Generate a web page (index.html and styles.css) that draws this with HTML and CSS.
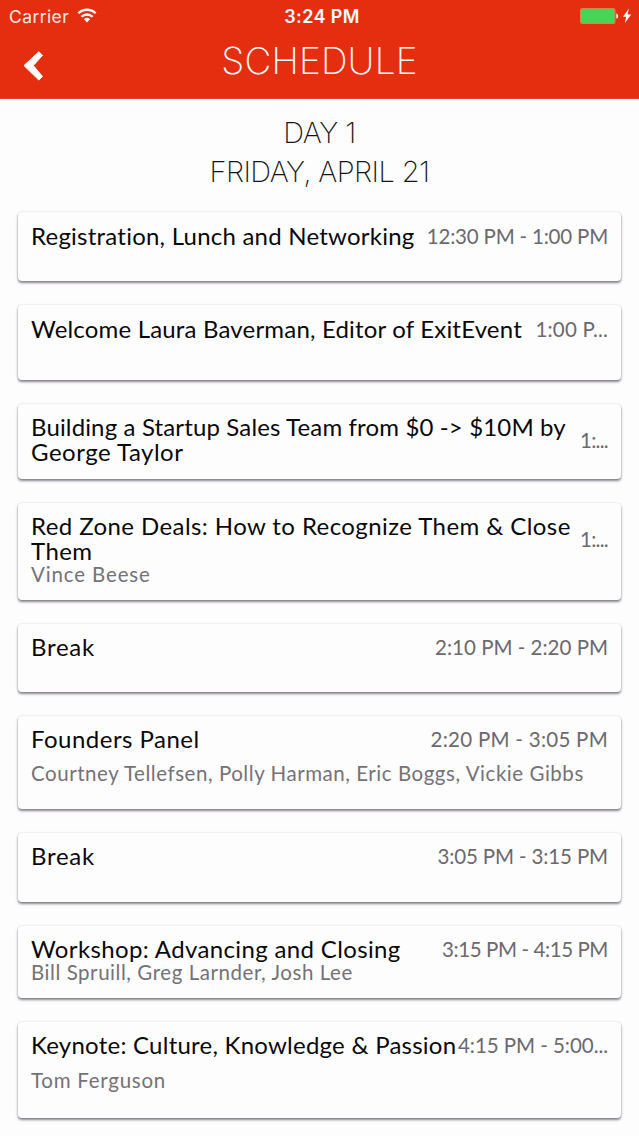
FILE: index.html
```html
<!DOCTYPE html>
<html lang="en">
<head>
<meta charset="utf-8">
<title>Schedule</title>
<link rel="stylesheet" href="styles.css">
</head>
<body>
<header class="header">
  <div class="status">
    <div class="status-left">
      <span class="carrier">Carrier</span>
      <svg class="wifi" viewBox="0 0 20 15" width="20" height="15"><g fill="none" stroke="#fff" stroke-width="2.3"><path d="M1.3 5.3a12.4 12.4 0 0 1 17.4 0"/><path d="M4.4 8.8a8 8 0 0 1 11.2 0"/></g><path d="M6.9 11.2a4.5 4.5 0 0 1 6.2 0L10 14.4z" fill="#fff"/></svg>
    </div>
    <span class="clock">3:24 PM</span>
    <div class="status-right">
      <svg viewBox="0 0 52 17" width="52" height="17"><rect x=".6" y=".6" width="34.3" height="14.8" rx="2" fill="#47d557" stroke="#d08a48" stroke-width="1.2"/><path d="M36.3 5.4c2.4.3 2.4 4.9 0 5.2z" fill="#fff"/><path d="M48.9.4L43 8.8h3.2l-1.4 6.2 6.4-8.6h-3.6z" fill="#fff"/></svg>
    </div>
  </div>
  <div class="nav">
    <svg class="back" viewBox="0 0 22 32" width="22" height="32"><path d="M2 15.6L16.8 1.8l3.7 3.5L11.3 15.6l9.2 10.9-3.7 3.5z" fill="#fff" stroke="#fff" stroke-linejoin="round"/></svg>
    <h1 class="page-title">SCHEDULE</h1>
    <span></span>
  </div>
</header>
<main>
  <div class="day"><div class="day-number">DAY 1</div><div class="day-date">FRIDAY, APRIL 21</div></div>
  <section class="sessions">
    <article class="card registration"><div class="row"><h2>Registration, Lunch and Networking</h2><time>12:30 PM - 1:00 PM</time></div></article>
    <article class="card welcome"><div class="row"><h2>Welcome Laura Baverman, Editor of ExitEvent</h2><time>1:00 P...</time></div></article>
    <article class="card building"><div class="row"><h2>Building a Startup Sales Team from $0 -&gt; $10M by<br><span class="wide">George Taylor</span></h2><time>1:...</time></div></article>
    <article class="card red-zone"><div class="row"><h2>Red Zone Deals: How to Recognize Them &amp; Close<br>Them</h2><time>1:...</time></div><p>Vince Beese</p></article>
    <article class="card break-one"><div class="row"><h2>Break</h2><time>2:10 PM - 2:20 PM</time></div></article>
    <article class="card founders"><div class="row"><h2>Founders Panel</h2><time>2:20 PM - 3:05 PM</time></div><p>Courtney Tellefsen, Polly Harman, Eric Boggs, Vickie Gibbs</p></article>
    <article class="card break-two"><div class="row"><h2>Break</h2><time>3:05 PM - 3:15 PM</time></div></article>
    <article class="card workshop"><div class="row"><h2>Workshop: Advancing and Closing</h2><time>3:15 PM - 4:15 PM</time></div><p>Bill Spruill, Greg Larnder, Josh Lee</p></article>
    <article class="card keynote"><div class="row"><h2>Keynote: Culture, Knowledge &amp; Passion</h2><time>4:15 PM - 5:00...</time></div><p>Tom Ferguson</p></article>
  </section>
</main>
</body>
</html>
```
FILE: styles.css
```css
* { box-sizing: border-box; }
body { margin: 0; height: 1136px; overflow: hidden; background: #fefdfe; font-family: Lato, sans-serif; color: #09090b; font-variant-ligatures: none; }
h1, h2, p { margin: 0; font-weight: 400; }

.header { height: 99px; background: #e52e10; border-bottom: 1px solid #d9442c; color: #fff; font-family: Inter, sans-serif; }
.status { display: grid; grid-template-columns: 1fr auto 1fr; height: 32px; padding: 0 7px 0 9px; line-height: 33px; }
.status-left { display: flex; align-items: center; gap: 8px; }
.carrier { font-size: 17.5px; letter-spacing: .4px; color: #ffe9e2; }
.clock { font-size: 18px; font-weight: 600; letter-spacing: .4px; padding-left: 3px; }
.status-right { display: flex; justify-content: flex-end; align-items: center; }
.wifi { margin-top: -2px; }
.nav { display: grid; grid-template-columns: 60px 1fr 60px; }
.back { margin: 18px 0 0 22px; }
.page-title { text-align: center; font-size: 37px; font-weight: 150; line-height: 58px; letter-spacing: .2px; }

.day { padding: 15px 0 21px; text-align: center; font: 200 29px/38.5px Inter, sans-serif; color: #161417; }
.day-number { letter-spacing: -.5px; }
.day-date { letter-spacing: -.6px; }

.sessions { display: flex; flex-direction: column; gap: 24px; padding: 0 18px; }
.card { flex: none; height: 69px; padding: 10px 13px 0 13px; border-radius: 4px; background: #fefdfe; box-shadow: 0 2px 2.5px rgba(20, 15, 25, .5), 0 0 2px rgba(20, 15, 25, .16); }
.row { display: flex; justify-content: space-between; align-items: center; white-space: nowrap; }
h2 { font-size: 24px; line-height: 25px; }
time { padding-top: 1px; margin-bottom: -1px; font-size: 20.5px; line-height: 25px; color: #6b696d; }
p { font-size: 20.5px; line-height: 22px; color: #747276; white-space: nowrap; }

.registration, .welcome { padding-top: 11px; }
.registration h2 { letter-spacing: .23px; }
.registration time { letter-spacing: -.2px; }
.welcome { height: 75px; }
.welcome h2 { letter-spacing: .18px; }
.welcome time { letter-spacing: .2px; }
.building { height: 75px; }
.building h2 { letter-spacing: .14px; }
.building .wide { letter-spacing: .5px; }
.building time, .red-zone time { letter-spacing: -.7px; }
.red-zone { height: 97px; }
.red-zone h2 { letter-spacing: .42px; }
.red-zone p { letter-spacing: .85px; }
.break-one { height: 68px; }
.break-one h2, .break-two h2 { letter-spacing: .7px; }
.break-one time { letter-spacing: 0; }
.founders { height: 93px; }
.founders h2 { letter-spacing: .48px; }
.founders time { letter-spacing: .27px; }
.founders p { margin-top: 11px; letter-spacing: .54px; }
.break-two time { letter-spacing: -.14px; }
.workshop { height: 72px; }
.workshop h2 { letter-spacing: .36px; }
.workshop time { letter-spacing: -.41px; }
.workshop p { letter-spacing: .55px; }
.keynote { height: 96px; }
.keynote h2 { letter-spacing: .24px; }
.keynote time { letter-spacing: -.05px; }
.keynote p { margin-top: 12px; letter-spacing: .74px; }
```
